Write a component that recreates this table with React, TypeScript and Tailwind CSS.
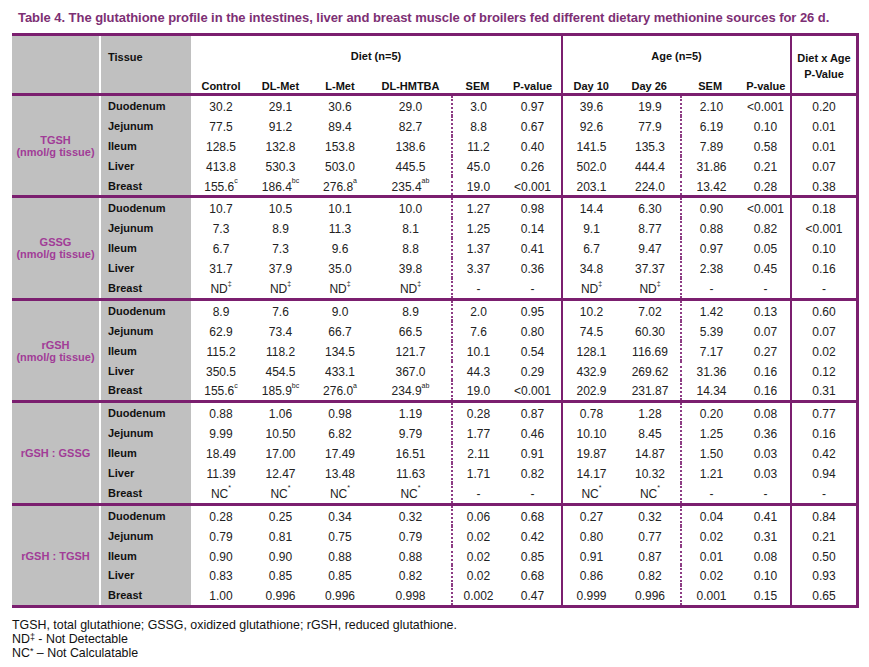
import React from 'react';

type Group = { label: string[]; rows: string[][] };

const GROUPS: Group[] = [
  {
    label: ['TGSH', '(nmol/g tissue)'],
    rows: [
      ['Duodenum', '30.2', '29.1', '30.6', '29.0', '3.0', '0.97', '39.6', '19.9', '2.10', '<0.001', '0.20'],
      ['Jejunum', '77.5', '91.2', '89.4', '82.7', '8.8', '0.67', '92.6', '77.9', '6.19', '0.10', '0.01'],
      ['Ileum', '128.5', '132.8', '153.8', '138.6', '11.2', '0.40', '141.5', '135.3', '7.89', '0.58', '0.01'],
      ['Liver', '413.8', '530.3', '503.0', '445.5', '45.0', '0.26', '502.0', '444.4', '31.86', '0.21', '0.07'],
      ['Breast', '155.6^c', '186.4^bc', '276.8^a', '235.4^ab', '19.0', '<0.001', '203.1', '224.0', '13.42', '0.28', '0.38'],
    ],
  },
  {
    label: ['GSSG', '(nmol/g tissue)'],
    rows: [
      ['Duodenum', '10.7', '10.5', '10.1', '10.0', '1.27', '0.98', '14.4', '6.30', '0.90', '<0.001', '0.18'],
      ['Jejunum', '7.3', '8.9', '11.3', '8.1', '1.25', '0.14', '9.1', '8.77', '0.88', '0.82', '<0.001'],
      ['Ileum', '6.7', '7.3', '9.6', '8.8', '1.37', '0.41', '6.7', '9.47', '0.97', '0.05', '0.10'],
      ['Liver', '31.7', '37.9', '35.0', '39.8', '3.37', '0.36', '34.8', '37.37', '2.38', '0.45', '0.16'],
      ['Breast', 'ND^‡', 'ND^‡', 'ND^‡', 'ND^‡', '-', '-', 'ND^‡', 'ND^‡', '-', '-', '-'],
    ],
  },
  {
    label: ['rGSH', '(nmol/g tissue)'],
    rows: [
      ['Duodenum', '8.9', '7.6', '9.0', '8.9', '2.0', '0.95', '10.2', '7.02', '1.42', '0.13', '0.60'],
      ['Jejunum', '62.9', '73.4', '66.7', '66.5', '7.6', '0.80', '74.5', '60.30', '5.39', '0.07', '0.07'],
      ['Ileum', '115.2', '118.2', '134.5', '121.7', '10.1', '0.54', '128.1', '116.69', '7.17', '0.27', '0.02'],
      ['Liver', '350.5', '454.5', '433.1', '367.0', '44.3', '0.29', '432.9', '269.62', '31.36', '0.16', '0.12'],
      ['Breast', '155.6^c', '185.9^bc', '276.0^a', '234.9^ab', '19.0', '<0.001', '202.9', '231.87', '14.34', '0.16', '0.31'],
    ],
  },
  {
    label: ['rGSH : GSSG'],
    rows: [
      ['Duodenum', '0.88', '1.06', '0.98', '1.19', '0.28', '0.87', '0.78', '1.28', '0.20', '0.08', '0.77'],
      ['Jejunum', '9.99', '10.50', '6.82', '9.79', '1.77', '0.46', '10.10', '8.45', '1.25', '0.36', '0.16'],
      ['Ileum', '18.49', '17.00', '17.49', '16.51', '2.11', '0.91', '19.87', '14.87', '1.50', '0.03', '0.42'],
      ['Liver', '11.39', '12.47', '13.48', '11.63', '1.71', '0.82', '14.17', '10.32', '1.21', '0.03', '0.94'],
      ['Breast', 'NC^*', 'NC^*', 'NC^*', 'NC^*', '-', '-', 'NC^*', 'NC^*', '-', '-', '-'],
    ],
  },
  {
    label: ['rGSH : TGSH'],
    rows: [
      ['Duodenum', '0.28', '0.25', '0.34', '0.32', '0.06', '0.68', '0.27', '0.32', '0.04', '0.41', '0.84'],
      ['Jejunum', '0.79', '0.81', '0.75', '0.79', '0.02', '0.42', '0.80', '0.77', '0.02', '0.31', '0.21'],
      ['Ileum', '0.90', '0.90', '0.88', '0.88', '0.02', '0.85', '0.91', '0.87', '0.01', '0.08', '0.50'],
      ['Liver', '0.83', '0.85', '0.85', '0.82', '0.02', '0.68', '0.86', '0.82', '0.02', '0.10', '0.93'],
      ['Breast', '1.00', '0.996', '0.996', '0.998', '0.002', '0.47', '0.999', '0.996', '0.001', '0.15', '0.65'],
    ],
  },
];

// widths of the 11 value columns; verticals sit on the left edge of some of them
const COL = [
  'w-[60px]',
  'w-[59px]',
  'w-[60px]',
  'w-[81px]',
  'w-[53px] border-l-2 border-dotted border-[#8d3c84]',
  'w-[57px]',
  'w-[59px] border-l-2 border-[#7b1f6f]',
  'w-[60px]',
  'w-[61px] border-l-2 border-dotted border-[#8d3c84]',
  'w-[49px]',
  'w-[66px] border-l-2 border-[#7b1f6f]',
];

function Val({ v }: { v: string }) {
  const [base, sup] = v.split('^');
  return (
    <span>
      {base}
      {sup && <sup className="text-[7px] align-[4px] leading-none">{sup}</sup>}
    </span>
  );
}

function GroupBlock({ g }: { g: Group }) {
  return (
    <div className="flex border-b-[3px] border-[#7b1f6f]">
      <div className="w-[89px] shrink-0 bg-[#c0c0c0] border-r-2 border-white flex flex-col items-center justify-center text-[11px] font-bold leading-[12px] text-[#a13c97]">
        {g.label.map((l) => (
          <div key={l}>{l}</div>
        ))}
      </div>
      <div className="flex flex-col">
        {g.rows.map((r) => (
          <div key={r[0]} className="flex h-[19.9px] items-center">
            <div className="w-[90px] shrink-0 h-full bg-[#c0c0c0] pl-[7px] pt-[1px] text-[11px] font-bold text-[#111] leading-[19px]">
              {r[0]}
            </div>
            {r.slice(1).map((v, i) => (
              <div key={i} className={`${COL[i]} shrink-0 h-full text-center text-[12px] leading-[19px] pt-[2px] text-[#222]`}>
                <Val v={v} />
              </div>
            ))}
          </div>
        ))}
      </div>
    </div>
  );
}

export default function App() {
  return (
    <div className="w-[869px] h-[667px] bg-white overflow-hidden font-['Liberation_Sans',Arial,sans-serif]">
      <div className="pt-[10px] pl-[18px] text-[13px] font-bold leading-[16px] text-[#7d2f74] tracking-[-0.05px] whitespace-nowrap">
        Table 4. The glutathione profile in the intestines, liver and breast muscle of broilers fed different dietary methionine sources for 26 d.
      </div>

      <div className="ml-[12px] mt-[7px] w-[847px] border-t-[3px] border-r-[3px] border-[#7b1f6f]">
        {/* header */}
        <div className="flex h-[60px] border-b-[3px] border-[#7b1f6f] text-[11px] font-bold text-[#111]">
          <div className="w-[89px] shrink-0 bg-[#c0c0c0] border-r-2 border-white" />
          <div className="w-[90px] shrink-0 bg-[#c0c0c0] pl-[7px] pt-[13px] leading-[16px]">Tissue</div>
          <div className="w-[370px] shrink-0 flex flex-col">
            <div className="h-[41px] flex items-center justify-center">Diet (n=5)</div>
            <div className="flex pt-[3px] leading-[13px]">
              <div className="w-[60px] text-center">Control</div>
              <div className="w-[59px] text-center">DL-Met</div>
              <div className="w-[60px] text-center">L-Met</div>
              <div className="w-[81px] text-center">DL-HMTBA</div>
              <div className="w-[53px] text-center">SEM</div>
              <div className="w-[57px] text-center">P-value</div>
            </div>
          </div>
          <div className="w-[229px] shrink-0 flex flex-col border-l-2 border-[#7b1f6f]">
            <div className="h-[41px] flex items-center justify-center">Age (n=5)</div>
            <div className="flex pt-[3px] leading-[13px]">
              <div className="w-[57px] text-center">Day 10</div>
              <div className="w-[60px] text-center">Day 26</div>
              <div className="w-[63px] text-center">SEM</div>
              <div className="w-[49px] text-center">P-value</div>
            </div>
          </div>
          <div className="w-[66px] shrink-0 border-l-2 border-[#7b1f6f] flex flex-col items-center justify-center leading-[16px] pt-[2px]">
            <div>Diet x Age</div>
            <div>P-Value</div>
          </div>
        </div>

        {GROUPS.map((g) => (
          <GroupBlock key={g.label[0]} g={g} />
        ))}
      </div>

      <div className="ml-[12px] mt-[10px] text-[12.4px] leading-[14px] text-[#111]">
        <div>TGSH, total glutathione; GSSG, oxidized glutathione; rGSH, reduced glutathione.</div>
        <div>
          ND<span className="text-[9px] relative top-[-3px] leading-none">‡</span> - Not Detectable
        </div>
        <div>
          NC<span className="text-[9px] relative top-[-3px] leading-none">*</span> – Not Calculatable
        </div>
      </div>
    </div>
  );
}
